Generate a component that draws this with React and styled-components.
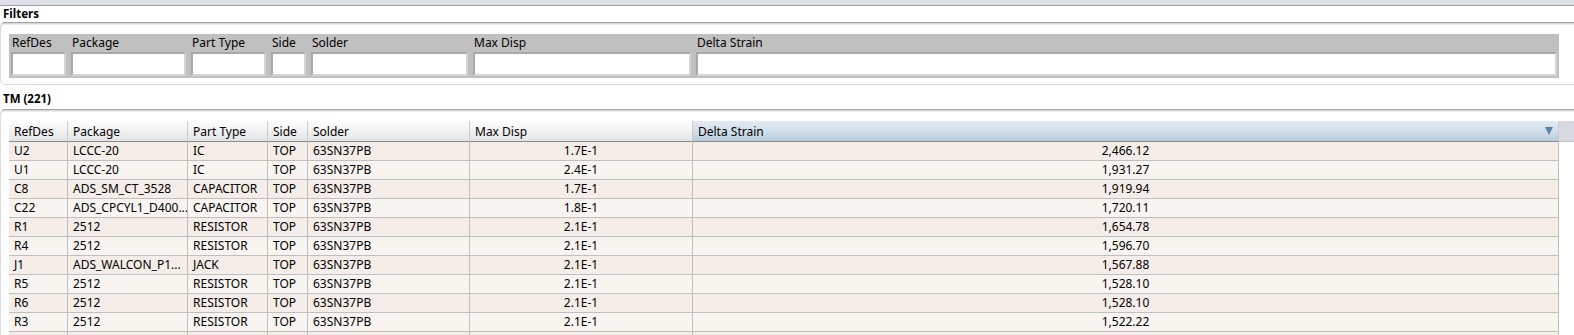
import React from 'react';
import styled, { createGlobalStyle } from 'styled-components';

const GlobalStyle = createGlobalStyle`
  html, body {
    margin: 0;
    padding: 0;
    background: #ffffff;
    font-family: "Noto Sans", "Open Sans", sans-serif;
    font-size: 12px;
    color: #000;
    overflow: hidden;
  }
`;

const COLS = '59px 120px 80px 40px 162px 223px 866px';

const columns = [
  { key: 'ref', title: 'RefDes' },
  { key: 'pkg', title: 'Package' },
  { key: 'type', title: 'Part Type' },
  { key: 'side', title: 'Side' },
  { key: 'solder', title: 'Solder' },
  { key: 'disp', title: 'Max Disp', center: true },
  { key: 'strain', title: 'Delta Strain', center: true, sorted: true },
];

const rows = [
  ['U2', 'LCCC-20', 'IC', 'TOP', '63SN37PB', '1.7E-1', '2,466.12'],
  ['U1', 'LCCC-20', 'IC', 'TOP', '63SN37PB', '2.4E-1', '1,931.27'],
  ['C8', 'ADS_SM_CT_3528', 'CAPACITOR', 'TOP', '63SN37PB', '1.7E-1', '1,919.94'],
  ['C22', 'ADS_CPCYL1_D400...', 'CAPACITOR', 'TOP', '63SN37PB', '1.8E-1', '1,720.11'],
  ['R1', '2512', 'RESISTOR', 'TOP', '63SN37PB', '2.1E-1', '1,654.78'],
  ['R4', '2512', 'RESISTOR', 'TOP', '63SN37PB', '2.1E-1', '1,596.70'],
  ['J1', 'ADS_WALCON_P1...', 'JACK', 'TOP', '63SN37PB', '2.1E-1', '1,567.88'],
  ['R5', '2512', 'RESISTOR', 'TOP', '63SN37PB', '2.1E-1', '1,528.10'],
  ['R6', '2512', 'RESISTOR', 'TOP', '63SN37PB', '2.1E-1', '1,528.10'],
  ['R3', '2512', 'RESISTOR', 'TOP', '63SN37PB', '2.1E-1', '1,522.22'],
  ['', '', '', '', '', '', ''],
];

const Page = styled.div`
  width: 1574px;
  height: 335px;
  overflow: hidden;
`;

const TopBar = styled.div`
  height: 5px;
  background: #dde0e7;
  border-bottom: 1px solid #9d9fa6;
`;

const SectionTitle = styled.div`
  height: ${(p) => p.$h}px;
  padding-left: 3px;
  font-weight: 700;
  font-size: 11.5px;
  line-height: ${(p) => p.$lh}px;
`;

const GroupBox = styled.div`
  margin-right: -8px;
  padding: ${(p) => p.$pad};
  border: 1px solid #dcdcdc;
  border-top-color: #a3a3a3;
  border-radius: 5px;
  box-shadow: inset 0 1px 0 #d8d8d8, inset 0 2px 0 #ececec;
  background: #ffffff;
`;

const FilterPanel = styled.div`
  width: 1550px;
  background: #c0c0c0;
  display: grid;
  grid-template-columns: ${COLS};
  grid-template-rows: 18px 26px;
`;

const FilterLabel = styled.div`
  padding-left: ${(p) => (p.$first ? 3 : 4)}px;
  line-height: 18px;
  white-space: nowrap;
`;

const FilterInput = styled.div`
  margin: 0 2px 2px ${(p) => (p.$first ? 2 : 3)}px;
  background: #ffffff;
  border: 2px solid #a8a8a8;
  border-right-color: #d4d4d4;
  border-bottom-color: #d4d4d4;
  box-sizing: border-box;
`;

const Table = styled.div`
  display: flex;
  flex-direction: column;
`;

const HeaderRow = styled.div`
  display: flex;
  height: 21px;
`;

const HeaderGrid = styled.div`
  display: grid;
  grid-template-columns: ${COLS};
  width: 1550px;
  flex: none;
`;

const HeaderCell = styled.div`
  position: relative;
  display: flex;
  align-items: center;
  padding-left: 5px;
  box-sizing: border-box;
  border-right: 1px solid #c9cacd;
  border-bottom: 1px solid #8b8c8f;
  background: ${(p) =>
    p.$sorted
      ? 'linear-gradient(#e3eaf2 0%, #d3e0eb 45%, #b9cddd 100%)'
      : 'linear-gradient(#ffffff 0%, #f2f2f3 45%, #e3e4e7 100%)'};
  white-space: nowrap;
`;

const SortArrow = styled.span`
  position: absolute;
  right: 5px;
  top: 6px;
  width: 0;
  height: 0;
  border-left: 4px solid transparent;
  border-right: 4px solid transparent;
  border-top: 8px solid #5c7fa6;
`;

const HeaderFiller = styled.div`
  flex: 1;
  background: #d7dae1;
  border-bottom: 1px solid #c0c2c8;
`;

const BodyGrid = styled.div`
  display: grid;
  grid-template-columns: ${COLS};
  grid-auto-rows: 19px;
  width: 1550px;
`;

const Cell = styled.div`
  padding: 0 5px;
  box-sizing: border-box;
  line-height: 18px;
  border-right: 1px solid #bfbfbf;
  border-bottom: 1px solid #bfbfbf;
  background: ${(p) => (p.$odd ? '#f8f5f1' : '#f5ede7')};
  text-align: ${(p) => (p.$center ? 'center' : 'left')};
  white-space: nowrap;
  overflow: hidden;
`;

const App = () => (
  <Page>
    <GlobalStyle />
    <TopBar />
    <SectionTitle $h={16} $lh={16}>Filters</SectionTitle>
    <GroupBox $pad="11px 0 6px 8px">
      <FilterPanel>
        {columns.map((c, i) => (
          <FilterLabel key={c.key} $first={i === 0}>
            {c.title}
          </FilterLabel>
        ))}
        {columns.map((c, i) => (
          <FilterInput key={c.key} $first={i === 0} />
        ))}
      </FilterPanel>
    </GroupBox>
    <SectionTitle $h={24} $lh={28}>TM (221)</SectionTitle>
    <GroupBox $pad="11px 0 0 8px">
      <Table>
        <HeaderRow>
          <HeaderGrid>
            {columns.map((c) => (
              <HeaderCell key={c.key} $sorted={c.sorted}>
                {c.title}
                {c.sorted && <SortArrow />}
              </HeaderCell>
            ))}
          </HeaderGrid>
          <HeaderFiller />
        </HeaderRow>
        <BodyGrid>
          {rows.map((r, ri) =>
            r.map((v, ci) => (
              <Cell key={`${ri}-${ci}`} $odd={ri % 2 === 1} $center={columns[ci].center}>
                {v}
              </Cell>
            ))
          )}
        </BodyGrid>
      </Table>
    </GroupBox>
  </Page>
);

export default App;
